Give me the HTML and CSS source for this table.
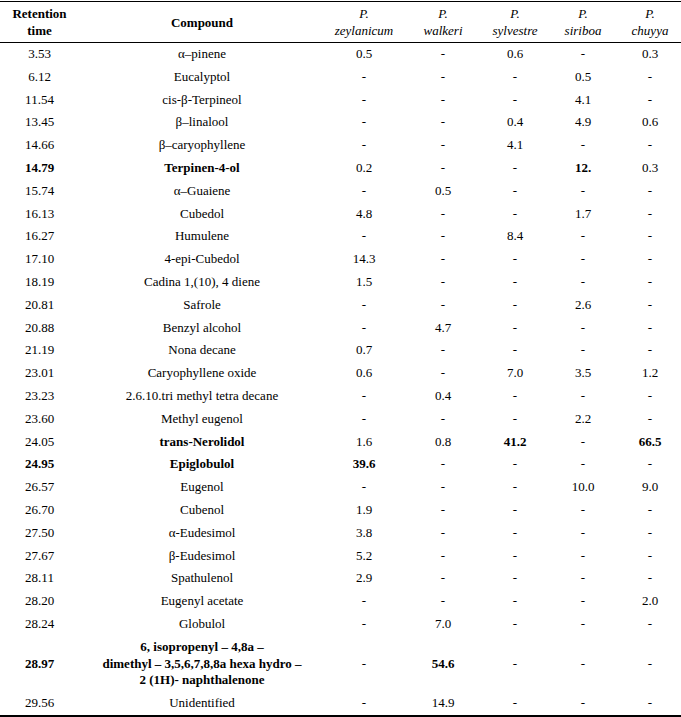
FILE: index.html
```html
<!DOCTYPE html>
<html>
<head>
<meta charset="utf-8">
<link rel="stylesheet" href="styles.css">
</head>
<body>
<table class="data">
<colgroup>
<col class="c1"><col class="c2"><col class="c3"><col class="c4"><col class="c5"><col class="c6"><col class="c7">
</colgroup>
<thead>
<tr>
<th class="hb">Retention<br>time</th>
<th class="hb">Compound</th>
<th class="sp">P.<br>zeylanicum</th>
<th class="sp">P.<br>walkeri</th>
<th class="sp">P.<br>sylvestre</th>
<th class="sp">P.<br>siriboa</th>
<th class="sp">P.<br>chuyya</th>
</tr>
</thead>
<tbody>
<tr><td>3.53</td><td>α–pinene</td><td>0.5</td><td>-</td><td>0.6</td><td>-</td><td>0.3</td></tr>
<tr><td>6.12</td><td>Eucalyptol</td><td>-</td><td>-</td><td>-</td><td>0.5</td><td>-</td></tr>
<tr><td>11.54</td><td>cis-β-Terpineol</td><td>-</td><td>-</td><td>-</td><td>4.1</td><td>-</td></tr>
<tr><td>13.45</td><td>β–linalool</td><td>-</td><td>-</td><td>0.4</td><td>4.9</td><td>0.6</td></tr>
<tr><td>14.66</td><td>β–caryophyllene</td><td>-</td><td>-</td><td>4.1</td><td>-</td><td>-</td></tr>
<tr><td class="b">14.79</td><td class="b">Terpinen-4-ol</td><td>0.2</td><td>-</td><td>-</td><td class="b">12.</td><td>0.3</td></tr>
<tr><td>15.74</td><td>α–Guaiene</td><td>-</td><td>0.5</td><td>-</td><td>-</td><td>-</td></tr>
<tr><td>16.13</td><td>Cubedol</td><td>4.8</td><td>-</td><td>-</td><td>1.7</td><td>-</td></tr>
<tr><td>16.27</td><td>Humulene</td><td>-</td><td>-</td><td>8.4</td><td>-</td><td>-</td></tr>
<tr><td>17.10</td><td>4-epi-Cubedol</td><td>14.3</td><td>-</td><td>-</td><td>-</td><td>-</td></tr>
<tr><td>18.19</td><td>Cadina 1,(10), 4 diene</td><td>1.5</td><td>-</td><td>-</td><td>-</td><td>-</td></tr>
<tr><td>20.81</td><td>Safrole</td><td>-</td><td>-</td><td>-</td><td>2.6</td><td>-</td></tr>
<tr><td>20.88</td><td>Benzyl alcohol</td><td>-</td><td>4.7</td><td>-</td><td>-</td><td>-</td></tr>
<tr><td>21.19</td><td>Nona decane</td><td>0.7</td><td>-</td><td>-</td><td>-</td><td>-</td></tr>
<tr><td>23.01</td><td>Caryophyllene oxide</td><td>0.6</td><td>-</td><td>7.0</td><td>3.5</td><td>1.2</td></tr>
<tr><td>23.23</td><td>2.6.10.tri methyl tetra decane</td><td>-</td><td>0.4</td><td>-</td><td>-</td><td>-</td></tr>
<tr><td>23.60</td><td>Methyl eugenol</td><td>-</td><td>-</td><td>-</td><td>2.2</td><td>-</td></tr>
<tr><td>24.05</td><td class="b">trans-Nerolidol</td><td>1.6</td><td>0.8</td><td class="b">41.2</td><td>-</td><td class="b">66.5</td></tr>
<tr><td class="b">24.95</td><td class="b">Epiglobulol</td><td class="b">39.6</td><td>-</td><td>-</td><td>-</td><td>-</td></tr>
<tr><td>26.57</td><td>Eugenol</td><td>-</td><td>-</td><td>-</td><td>10.0</td><td>9.0</td></tr>
<tr><td>26.70</td><td>Cubenol</td><td>1.9</td><td>-</td><td>-</td><td>-</td><td>-</td></tr>
<tr><td>27.50</td><td>α-Eudesimol</td><td>3.8</td><td>-</td><td>-</td><td>-</td><td>-</td></tr>
<tr><td>27.67</td><td>β-Eudesimol</td><td>5.2</td><td>-</td><td>-</td><td>-</td><td>-</td></tr>
<tr><td>28.11</td><td>Spathulenol</td><td>2.9</td><td>-</td><td>-</td><td>-</td><td>-</td></tr>
<tr><td>28.20</td><td>Eugenyl acetate</td><td>-</td><td>-</td><td>-</td><td>-</td><td>2.0</td></tr>
<tr><td>28.24</td><td>Globulol</td><td>-</td><td>7.0</td><td>-</td><td>-</td><td>-</td></tr>
<tr><td class="b">28.97</td><td class="b">6, isopropenyl – 4,8a –<br>dimethyl – 3,5,6,7,8,8a hexa hydro –<br>2 (1H)- naphthalenone</td><td>-</td><td class="b">54.6</td><td>-</td><td>-</td><td>-</td></tr>
<tr><td>29.56</td><td>Unidentified</td><td>-</td><td>14.9</td><td>-</td><td>-</td><td>-</td></tr>
</tbody>
</table>
</body>
</html>
```

FILE: styles.css
```css
html, body {
  margin: 0;
  padding: 0;
  background: #fff;
}
body {
  padding-top: 1px;
  font-family: "Liberation Serif", "Times New Roman", serif;
  font-size: 13px;
  color: #000;
}
.data {
  width: 681px;
  border-collapse: collapse;
  table-layout: fixed;
  border-top: 1px solid #000;
  border-bottom: 2px solid #000;
}
.c1 { width: 79px; }
.c2 { width: 246px; }
.c3 { width: 78px; }
.c4 { width: 80px; }
.c5 { width: 64px; }
.c6 { width: 72px; }
.c7 { width: 62px; }
.data thead tr {
  border-bottom: 1px solid #000;
}
.data th {
  padding: 3px 0 3px;
  line-height: 17px;
  text-align: center;
  vertical-align: middle;
}
.data th.hb {
  font-weight: bold;
}
.data th.sp {
  font-weight: normal;
  font-style: italic;
}
.data td {
  padding: 3px 0;
  line-height: 16.8px;
  text-align: center;
  vertical-align: middle;
}
.data td.b {
  font-weight: bold;
}
```
